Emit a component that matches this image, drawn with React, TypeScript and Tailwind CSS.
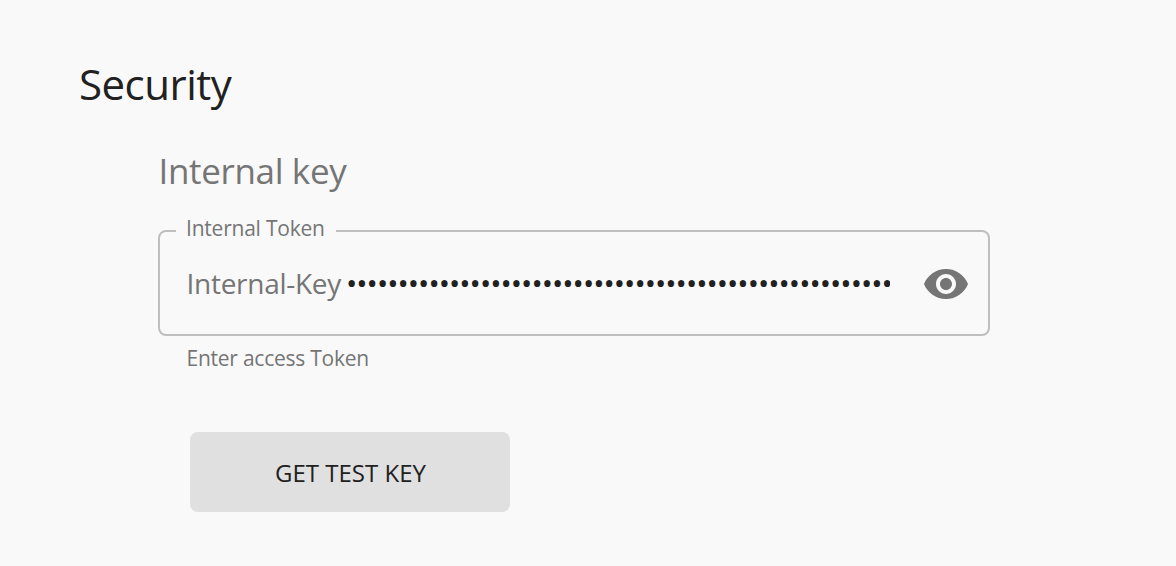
import React from "react";

const MASKED = "•".repeat(53);

function EyeIcon() {
  return (
    <svg viewBox="0 0 24 24" className="h-12 w-12 shrink-0" fill="#757575" aria-hidden="true">
      <path d="M12 4.5C7 4.5 2.73 7.61 1 12c1.73 4.39 6 7.5 11 7.5s9.27-3.11 11-7.5c-1.73-4.39-6-7.5-11-7.5zM12 17c-2.76 0-5-2.24-5-5s2.24-5 5-5 5 2.24 5 5-2.24 5-5 5zm0-8c-1.66 0-3 1.34-3 3s1.34 3 3 3 3-1.34 3-3-1.34-3-3-3z" />
    </svg>
  );
}

export default function App() {
  return (
    <main className="h-[566px] w-full overflow-hidden bg-[#f9f9f9] pl-[78px] pt-[59px] font-['Open_Sans',sans-serif] text-[#212121]">
      <h1 className="ml-px h-[50px] text-[42px] leading-[50px] tracking-[-0.5px]">Security</h1>
      <section className="ml-20 mt-10 w-[832px]">
        <h2 className="h-[44px] pl-[0.5px] text-[35px] leading-[44px] tracking-[-0.35px] text-[#757575]">Internal key</h2>
        <fieldset className="mt-[22px] h-[121px] rounded-lg border-2 border-[#bfbfbf] pl-4">
          <legend className="h-[32px] w-40 pl-[10px] text-[21px] leading-[26px] tracking-[-0.22px] text-[#757575]">
            Internal Token
          </legend>
          <div className="flex h-[72px] items-center pl-[10.5px]">
            <span className="w-[155px] shrink-0 whitespace-nowrap text-[28px] leading-[38px] tracking-[-0.28px] text-[#757575]">Internal-Key</span>
            <span className="ml-[4.5px] w-[544px] shrink-0 overflow-hidden whitespace-nowrap text-[30px] leading-[38px] tracking-[-0.98px]">{MASKED}</span>
            <button type="button" aria-label="Show token" className="ml-[31.5px] mt-0.5">
              <EyeIcon />
            </button>
          </div>
        </fieldset>
        <p className="ml-[28.5px] mt-2 h-7 text-[21px] leading-7 tracking-[-0.24px] text-[#757575]">Enter access Token</p>
        <button type="button" className="ml-8 mt-[60px] h-20 w-80 rounded-lg bg-[#e0e0e0] pl-px pt-0.5 text-[24px]">
          GET TEST KEY
        </button>
      </section>
    </main>
  );
}
